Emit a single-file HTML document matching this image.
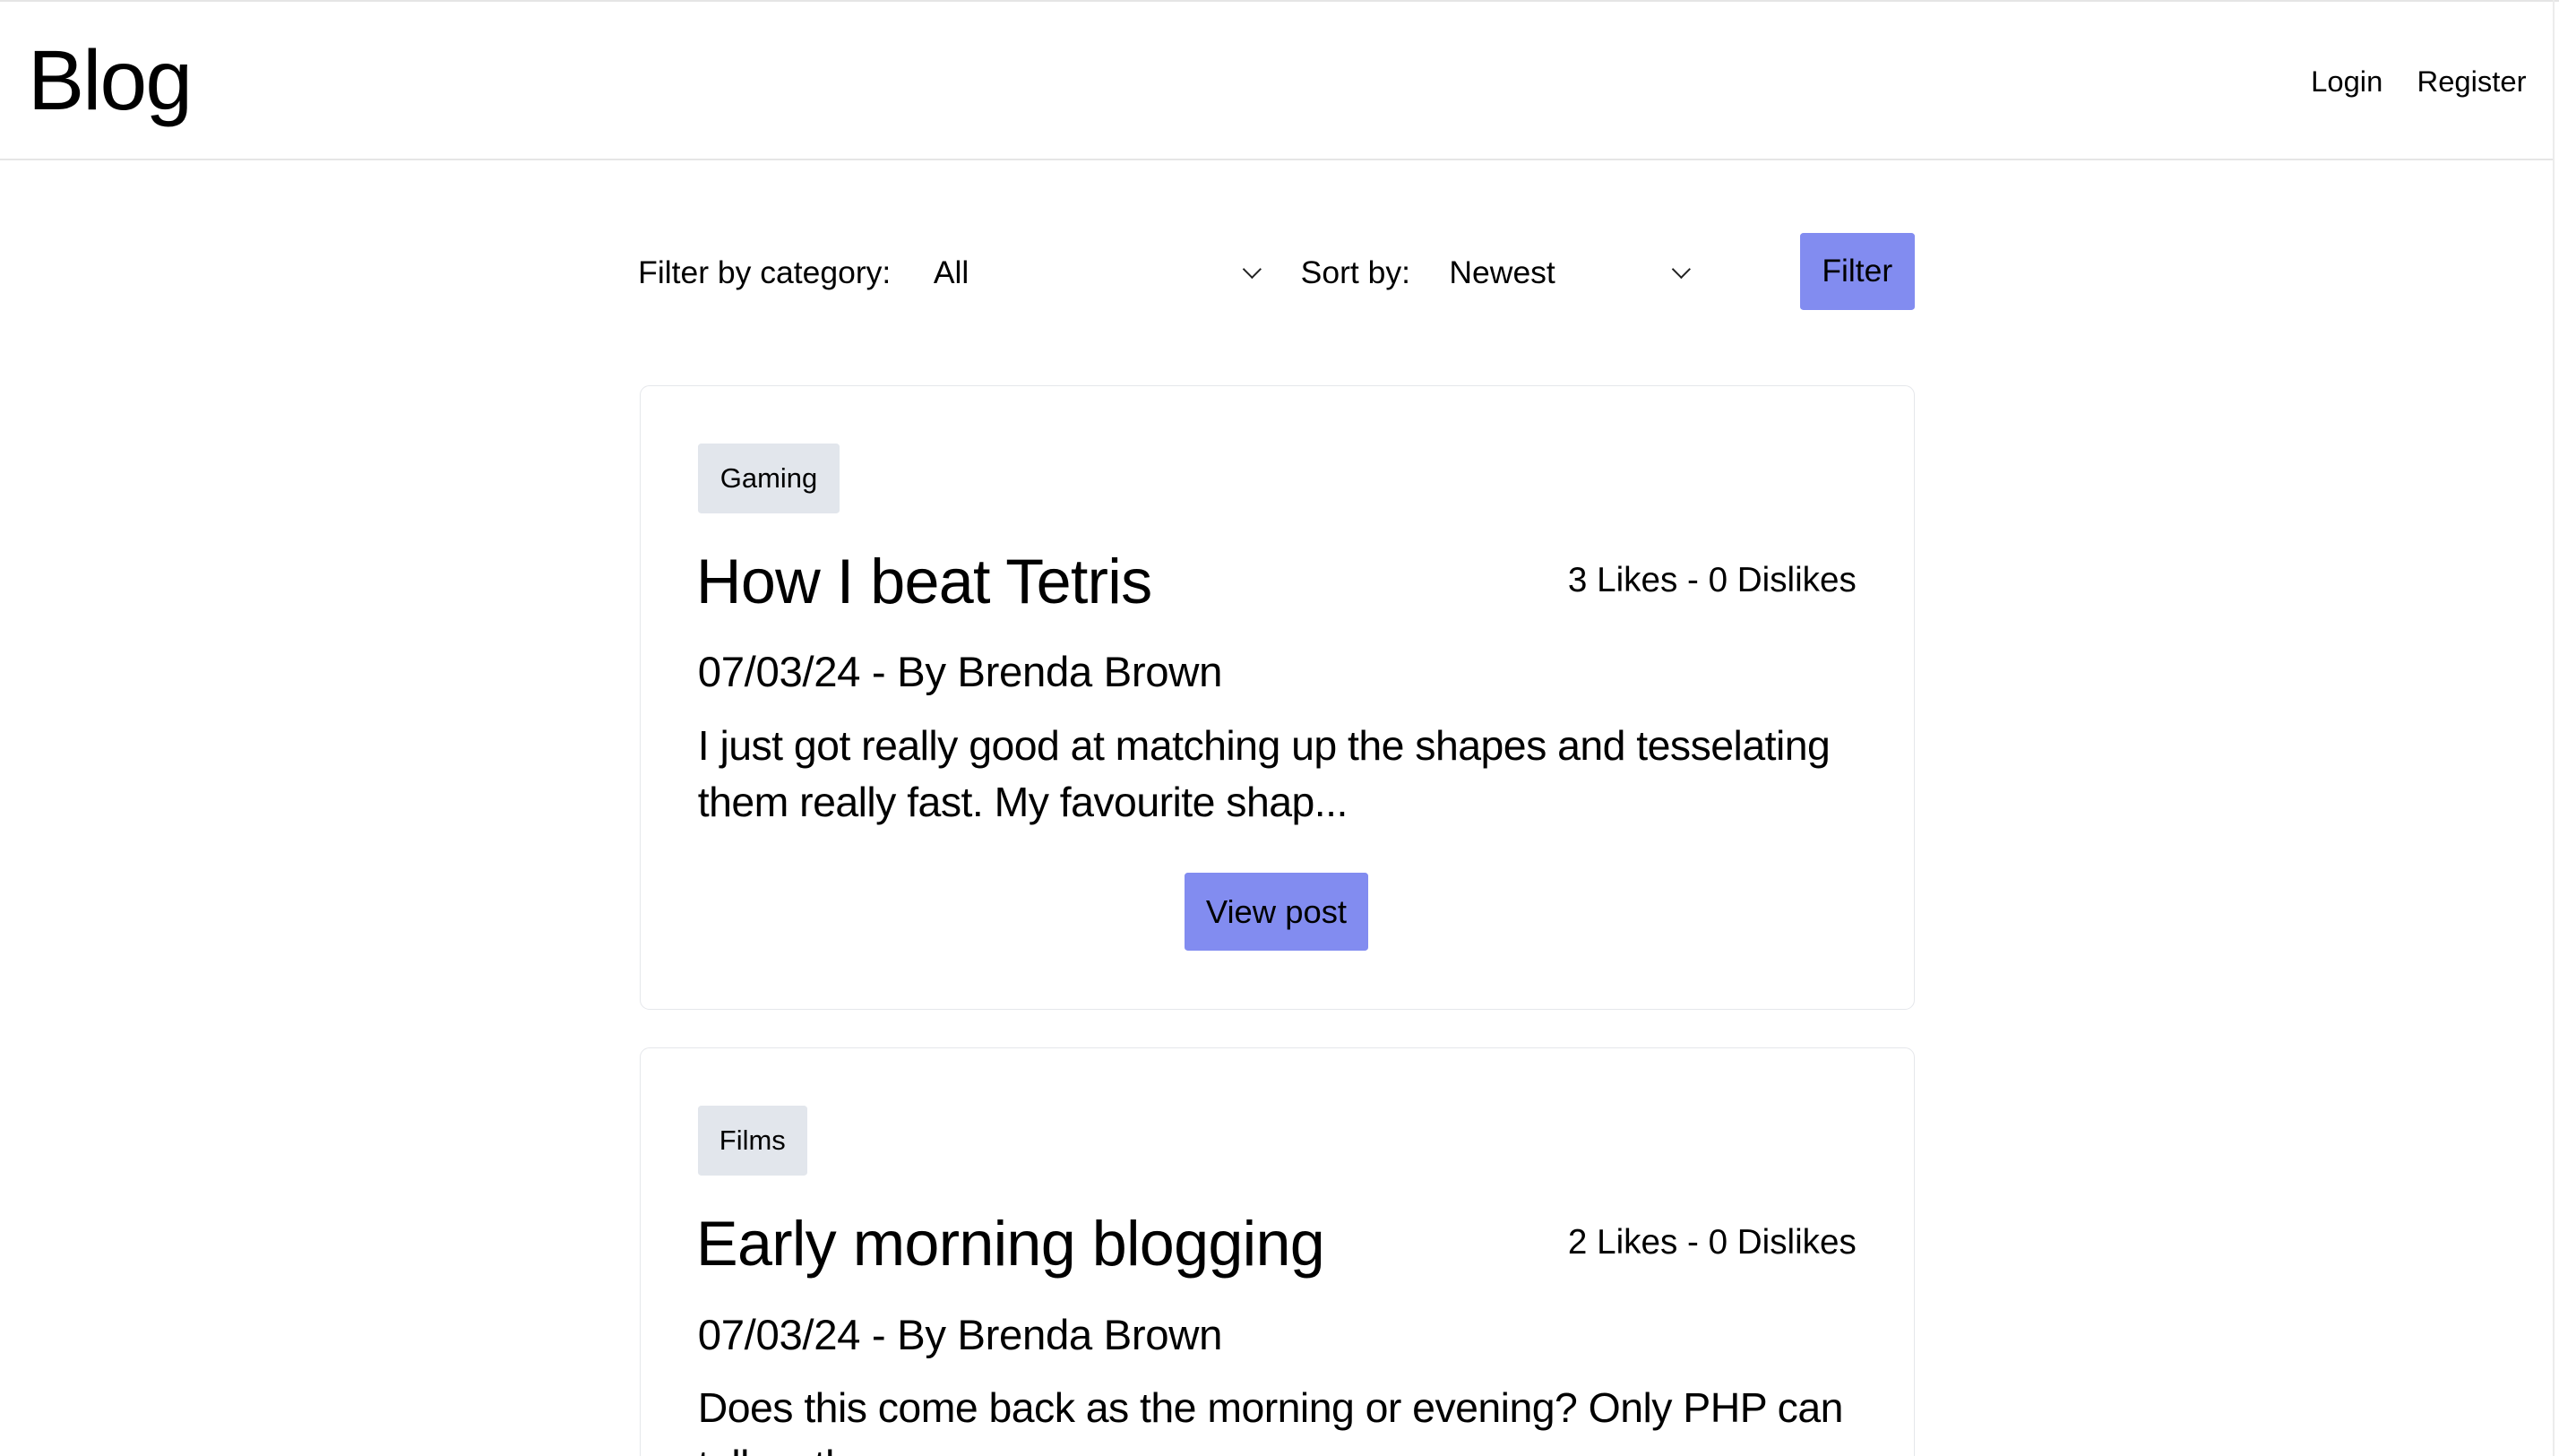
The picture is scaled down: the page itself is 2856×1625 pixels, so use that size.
<!DOCTYPE html>
<html><head><meta charset="utf-8"><style>
html{zoom:1.82143;height:892px;overflow:hidden}
body{margin:0;width:1568px;height:892px;overflow:hidden;background:#fff;font-family:"Liberation Sans",Arial,sans-serif;color:#000;position:relative}
.a{position:absolute;white-space:nowrap}
.hl{position:absolute;background:#e5e5e5}
.card{position:absolute;left:392px;width:781px;border:1px solid #e5e7eb;border-radius:6px;box-sizing:border-box}
.tag{position:absolute;background:#e2e6ec;border-radius:2px;font-size:17px;line-height:43px;text-align:center}
.btn{position:absolute;background:#828cf0;border-radius:2px;text-align:center}
.chev{position:absolute;width:7px;height:7px;border-right:1.3px solid #222;border-bottom:1.3px solid #222;transform:rotate(45deg)}
</style></head><body>
<div class="hl" style="left:0;top:0;width:1568px;height:1px"></div>
<div class="hl" style="left:0;top:97px;width:1565px;height:1.5px"></div>
<div class="hl" style="left:1564px;top:0;width:1.5px;height:892px;background:#ececec"></div>
<div class="a" style="left:17px;top:20px;font-size:52px;line-height:60px;letter-spacing:-1px">Blog</div>
<div class="a" style="left:1416px;top:38px;font-size:18px;line-height:24px">Login</div>
<div class="a" style="left:1481px;top:38px;font-size:18px;line-height:24px">Register</div>

<div class="a" style="left:391px;top:155px;font-size:19.5px;line-height:25px">Filter by category:</div>
<div class="a" style="left:572px;top:155px;font-size:19.5px;line-height:25px">All</div>
<div class="chev" style="left:763px;top:161px"></div>
<div class="a" style="left:797px;top:155px;font-size:19.5px;line-height:25px">Sort by:</div>
<div class="a" style="left:888px;top:155px;font-size:19.5px;line-height:25px">Newest</div>
<div class="chev" style="left:1026px;top:161px"></div>
<div class="btn" style="left:1103px;top:143px;width:70px;height:47px;line-height:47px;font-size:19.5px">Filter</div>

<div class="card" style="top:236px;height:383px">
 <div class="tag" style="left:35px;top:35px;width:87px">Gaming</div>
 <div class="a" style="left:34px;top:97px;font-size:38.5px;line-height:46px;letter-spacing:-0.4px">How I beat Tetris</div>
 <div class="a" style="right:35px;top:106px;font-size:21.2px;line-height:26px">3 Likes - 0 Dislikes</div>
 <div class="a" style="left:35px;top:160px;font-size:26px;line-height:32px;letter-spacing:-0.2px">07/03/24 - By Brenda Brown</div>
 <div class="a" style="left:35px;top:203px;font-size:25.5px;line-height:35px;letter-spacing:-0.3px;white-space:normal;width:712px">I just got really good at matching up the shapes and tesselating them really fast. My favourite shap...</div>
 <div class="btn" style="left:333px;top:298px;width:113px;height:48px;line-height:48px;font-size:20px">View post</div>
</div>

<div class="card" style="top:642px;height:400px">
 <div class="tag" style="left:35px;top:35px;width:67px">Films</div>
 <div class="a" style="left:34px;top:97px;font-size:38.5px;line-height:46px;letter-spacing:-0.4px">Early morning blogging</div>
 <div class="a" style="right:35px;top:106px;font-size:21.2px;line-height:26px">2 Likes - 0 Dislikes</div>
 <div class="a" style="left:35px;top:160px;font-size:26px;line-height:32px;letter-spacing:-0.2px">07/03/24 - By Brenda Brown</div>
 <div class="a" style="left:35px;top:203px;font-size:25.5px;line-height:35px;letter-spacing:-0.3px;white-space:normal;width:712px">Does this come back as the morning or evening? Only PHP can tell us the answer...</div>
</div>
</body></html>
